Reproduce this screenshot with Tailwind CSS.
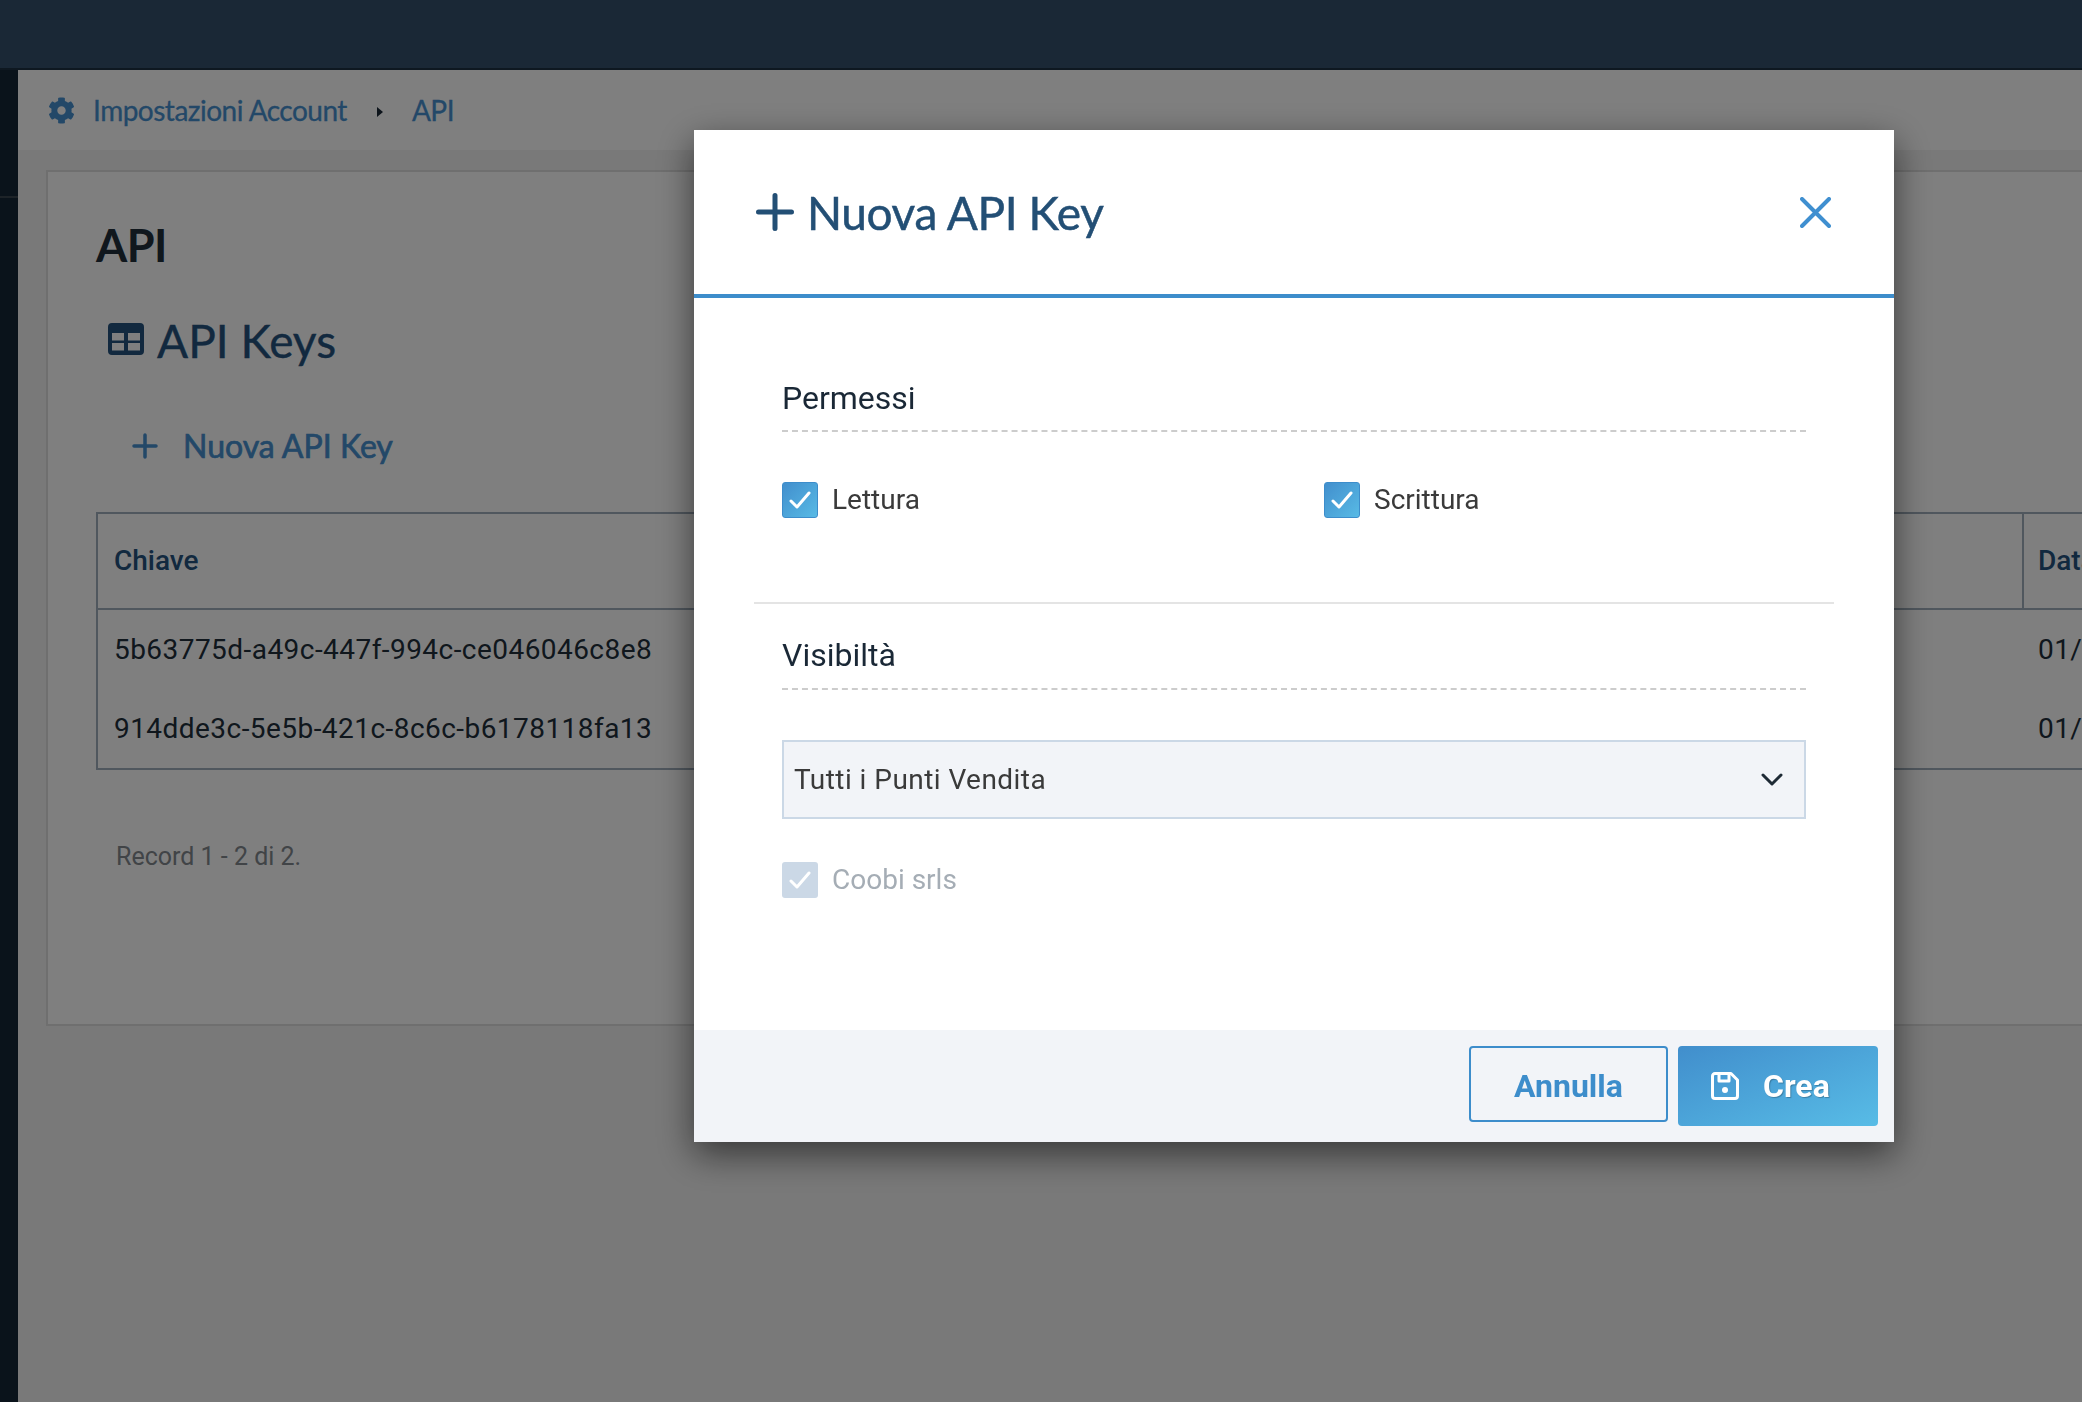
<!DOCTYPE html>
<html lang="it">
<head>
  <meta charset="UTF-8">
  <title>API Keys</title>
  <script src="https://cdn.jsdelivr.net/npm/@tailwindcss/browser@4"></script>
</head>
<body class="h-[1402px] overflow-hidden bg-[#f2f2f2] font-['Roboto',sans-serif] text-[#1a2836]">

  <!-- Top bar -->
  <header class="h-[70px] bg-[#34506c] border-b-2 border-[#1c3042]"></header>

  <div class="flex h-[1332px]">
    <!-- Sidebar -->
    <aside class="w-[18px] shrink-0 bg-[#142636]">
      <div class="mt-[126px] h-[2px] bg-[#3a4650]"></div>
    </aside>

    <main class="flex-1 min-w-0 overflow-hidden">
      <!-- Breadcrumb -->
      <div class="h-[80px] bg-white flex items-center pl-[30px] font-['Lato',sans-serif] text-[#4690d0] text-[28px] tracking-[-0.5px] [-webkit-text-stroke:0.3px]">
        <svg class="w-[27px] h-[27px] mr-[18px]" viewBox="0 0 512 512" fill="currentColor"><path d="M487.4 315.7l-42.6-24.6c4.3-23.2 4.3-47 0-70.2l42.6-24.6c4.9-2.8 7.1-8.6 5.5-14-11.1-35.6-30-67.8-54.7-94.6-3.8-4.1-10-5.1-14.8-2.3L380.8 110c-17.9-15.4-38.5-27.3-60.8-35.1V25.8c0-5.6-3.9-10.5-9.4-11.7-36.7-8.2-74.3-7.8-109.2 0-5.5 1.2-9.4 6.1-9.4 11.7V75c-22.2 7.9-42.8 19.8-60.8 35.1L88.7 85.5c-4.9-2.8-11-1.9-14.8 2.3-24.7 26.7-43.6 58.9-54.7 94.6-1.7 5.4.6 11.2 5.5 14L67.3 221c-4.3 23.2-4.3 47 0 70.2l-42.6 24.6c-4.9 2.8-7.1 8.6-5.5 14 11.1 35.6 30 67.8 54.7 94.6 3.8 4.1 10 5.1 14.8 2.3l42.6-24.6c17.9 15.4 38.5 27.3 60.8 35.1v49.2c0 5.6 3.9 10.5 9.4 11.7 36.7 8.2 74.3 7.8 109.2 0 5.5-1.2 9.4-6.1 9.4-11.7v-49.2c22.2-7.9 42.8-19.8 60.8-35.1l42.6 24.6c4.9 2.8 11 1.9 14.8-2.3 24.7-26.7 43.6-58.9 54.7-94.6 1.5-5.5-.7-11.3-5.6-14.1zM256 336c-44.1 0-80-35.9-80-80s35.9-80 80-80 80 35.9 80 80-35.9 80-80 80z"/></svg>
        <span>Impostazioni Account</span>
        <svg class="w-[6px] h-[10px] ml-[30px] mr-[29px] mt-[4px] text-[#1a2836]" viewBox="0 0 6 10" fill="currentColor"><path d="M0 0l6 5-6 5z"/></svg>
        <span>API</span>
      </div>

      <!-- Card -->
      <section class="ml-[28px] mt-[20px] w-[2100px] h-[856px] bg-white border-2 border-[#dedede] pl-[48px]">
        <h1 class="pt-[49px] font-['Lato',sans-serif] font-bold text-[45px] leading-[48px] tracking-[-0.5px] text-[#202e3a]">API</h1>

        <h2 class="mt-[48px] ml-[12px] flex items-center font-['Lato',sans-serif] text-[46px] leading-[48px] text-[#24527e] [-webkit-text-stroke:0.4px]">
          <svg class="w-[36px] h-[32px] mr-[13px] -mt-[4px]" viewBox="0 0 36 32" fill="currentColor"><path fill-rule="evenodd" d="M4 0h28a4 4 0 0 1 4 4v24a4 4 0 0 1-4 4H4a4 4 0 0 1-4-4V4a4 4 0 0 1 4-4zM4 10v7.5h12V10zM20 10v7.5h12V10zM4 20v7.5h12V20zM20 20v7.5h12V20z"/></svg>
          <span>API Keys</span>
        </h2>

        <a class="mt-[57px] ml-[36px] flex items-center h-[48px] font-['Lato',sans-serif] text-[32px] text-[#4690d0] [-webkit-text-stroke:0.7px]">
          <svg class="w-[26px] h-[26px] mr-[25px]" viewBox="0 0 26 26" fill="none" stroke="currentColor" stroke-width="3.5" stroke-linecap="round"><path d="M13 2v22M2 13h22"/></svg>
          <span>Nuova API Key</span>
        </a>

        <table class="mt-[42px] table-fixed border-separate border-spacing-0 border-2 border-[#a0aebc] w-[2000px] text-[28px] tracking-[0.45px]">
          <thead>
            <tr class="h-[96px] text-left text-[#24527e] tracking-normal">
              <th class="w-[1924px] pl-[16px] font-medium border-b-2 border-[#a0aebc]">Chiave</th>
              <th class="pl-[14px] font-medium border-l-2 border-b-2 border-[#a0aebc]">Data</th>
            </tr>
          </thead>
          <tbody class="text-[#202e3a]">
            <tr class="h-[79px]"><td class="pl-[16px]">5b63775d-a49c-447f-994c-ce046046c8e8</td><td class="pl-[16px]">01/01/2020</td></tr>
            <tr class="h-[79px]"><td class="pl-[16px]">914dde3c-5e5b-421c-8c6c-b6178118fa13</td><td class="pl-[16px]">01/01/2020</td></tr>
          </tbody>
        </table>

        <p class="mt-[71px] ml-[20px] text-[25px] leading-[32px] text-[#82888e]">Record 1 - 2 di 2.</p>
      </section>
    </main>
  </div>

  <!-- Overlay + modal -->
  <div class="fixed inset-0 bg-black/50 pt-[130px] pl-[694px]">
    <div class="w-[1200px] h-[1012px] bg-white flex flex-col shadow-[0_12px_34px_rgba(0,0,0,0.55)]">
      <div class="h-[168px] shrink-0 border-b-4 border-[#3d8dcb] flex items-center justify-between pl-[62px] pr-[63px]">
        <div class="flex items-center font-['Lato',sans-serif] text-[46px] tracking-[-0.4px] text-[#234f75] [-webkit-text-stroke:0.5px]">
          <svg class="w-[38px] h-[38px] mr-[13px]" viewBox="0 0 38 38" fill="none" stroke="currentColor" stroke-width="5" stroke-linecap="round"><path d="M19 2.500v33M2.500 19h33"/></svg>
          <span>Nuova API Key</span>
        </div>
        <svg class="w-[31px] h-[31px] text-[#3f8fd0]" viewBox="0 0 31 31" fill="none" stroke="currentColor" stroke-width="4" stroke-linecap="round"><path d="M2 2l27 27M29 2L2 29"/></svg>
      </div>

      <div class="flex-1 px-[60px]">
        <div class="px-[28px]">
          <h3 class="mt-[80px] h-[54px] pb-[12px] border-b-2 border-dashed border-[#cccccc] text-[32px] leading-[40px]">Permessi</h3>
          <div class="mt-[50px] grid grid-cols-[542px_1fr] text-[#3a3a3a] text-[28px] leading-[36px]">
            <label class="flex items-center gap-[14px]">
              <span class="w-[36px] h-[36px] rounded-[3px] bg-gradient-to-br from-[#428fcd] to-[#58bae5] border border-[#3d8dcb] flex items-center justify-center">
                <svg class="w-[22px] h-[18px]" viewBox="0 0 22 18" fill="none" stroke="white" stroke-width="3" stroke-linecap="round" stroke-linejoin="round"><path d="M2 10l6 6L20 2"/></svg>
              </span>
              Lettura
            </label>
            <label class="flex items-center gap-[14px]">
              <span class="w-[36px] h-[36px] rounded-[3px] bg-gradient-to-br from-[#428fcd] to-[#58bae5] border border-[#3d8dcb] flex items-center justify-center">
                <svg class="w-[22px] h-[18px]" viewBox="0 0 22 18" fill="none" stroke="white" stroke-width="3" stroke-linecap="round" stroke-linejoin="round"><path d="M2 10l6 6L20 2"/></svg>
              </span>
              Scrittura
            </label>
          </div>
        </div>

        <div class="mt-[84px] h-[2px] bg-[#e4e4e4]"></div>

        <div class="px-[28px]">
          <h3 class="mt-[31px] h-[55px] pb-[13px] border-b-2 border-dashed border-[#cccccc] text-[32px] leading-[40px]">Visibiltà</h3>
          <div class="mt-[50px] h-[79px] border-2 border-[#cbd8e6] bg-[#f2f4f8] flex items-center justify-between pl-[10px] pr-[21px] text-[28px] tracking-[0.45px] text-[#3a3a3a]">
            <span>Tutti i Punti Vendita</span>
            <svg class="w-[22px] h-[13px]" viewBox="0 0 22 13" fill="none" stroke="#1e2a35" stroke-width="3" stroke-linecap="round" stroke-linejoin="round"><path d="M2 2l9 9 9-9"/></svg>
          </div>
          <label class="mt-[43px] flex items-center gap-[14px] text-[28px] leading-[36px] text-[#a5adb5]">
            <span class="w-[36px] h-[36px] rounded-[3px] bg-[#cbd8e6] flex items-center justify-center">
              <svg class="w-[22px] h-[18px]" viewBox="0 0 22 18" fill="none" stroke="white" stroke-width="3" stroke-linecap="round" stroke-linejoin="round"><path d="M2 10l6 6L20 2"/></svg>
            </span>
            Coobi srls
          </label>
        </div>
      </div>

      <div class="h-[112px] shrink-0 bg-[#f2f4f8] flex justify-end items-start gap-[10px] pt-[16px] pr-[16px] text-[32px] font-bold">
        <button class="w-[199px] h-[76px] pt-[3px] rounded-[4px] border-2 border-[#3d8dcb] text-[#3d8dcb]">Annulla</button>
        <button class="w-[200px] h-[80px] rounded-[4px] bg-gradient-to-br from-[#418ecc] to-[#58bce6] text-white flex items-center pl-[33px] gap-[24px] [text-shadow:1px_1px_1px_rgba(0,0,0,0.25)]">
          <svg class="w-[28px] h-[28px]" viewBox="0 0 28 28" fill="none" stroke="white" stroke-width="3" stroke-linejoin="round"><path d="M4 1.500h16l6.500 6.500v16a2.500 2.500 0 0 1-2.500 2.500H4A2.500 2.500 0 0 1 1.500 24V4A2.500 2.500 0 0 1 4 1.500z"/><path d="M8 2v7h10V2"/><circle cx="14" cy="18" r="3" fill="white" stroke="none"/></svg>
          Crea
        </button>
      </div>
    </div>
  </div>
</body>
</html>
